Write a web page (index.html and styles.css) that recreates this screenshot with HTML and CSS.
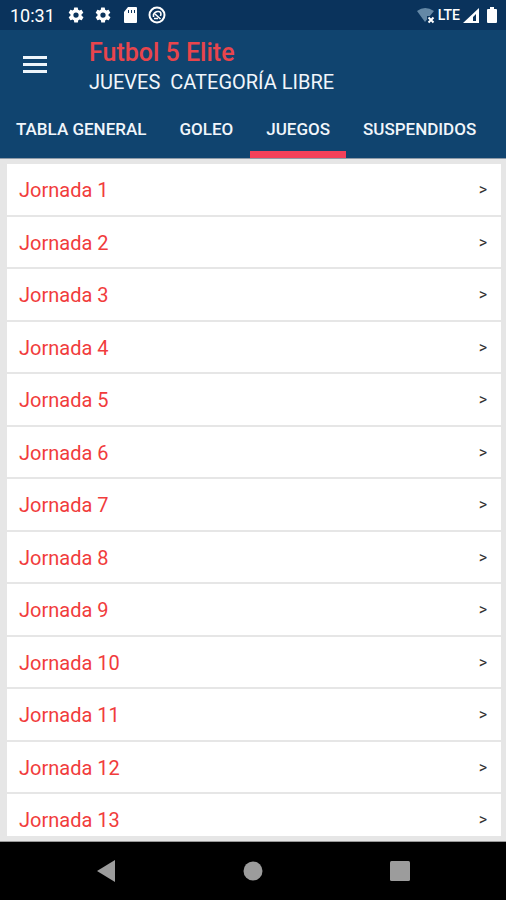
FILE: index.html
```html
<!DOCTYPE html>
<html lang="es">
<head>
<meta charset="utf-8">
<meta name="viewport" content="width=device-width, initial-scale=1">
<title>Futbol 5 Elite</title>
<link rel="stylesheet" href="styles.css">
</head>
<body>
<div class="status">
  <time class="clock">10:31</time>
  <div class="status-left">
    <svg width="18" height="18" viewBox="0 0 24 24"><path fill="#fff" fill-rule="evenodd" d="M19.4 13a7.800 7.800 0 0 0 0-2l2.100-1.600c.2-.2.3-.5.1-.7l-2-3.400c-.1-.3-.4-.3-.6-.3l-2.500 1a7.300 7.300 0 0 0-1.700-1l-.4-2.600a.5.5 0 0 0-.5-.4h-4a.5.5 0 0 0-.5.4L9.100 5a7.700 7.700 0 0 0-1.700 1L5 5c-.3-.1-.5 0-.6.2l-2 3.500c-.1.200-.1.500.1.600L4.600 11a8 8 0 0 0 0 2l-2.100 1.600c-.2.200-.3.500-.1.700l2 3.400c.1.300.4.300.6.300l2.500-1c.5.400 1.100.7 1.700 1l.4 2.600c0 .2.200.4.500.4h4c.2 0 .5-.2.500-.4L15 19a7 7 0 0 0 1.700-1l2.500 1c.2.100.5 0 .6-.2l2-3.400c.1-.3.1-.6-.1-.7zM12 8.500a3.500 3.500 0 1 1 0 7 3.500 3.500 0 0 1 0-7z"/></svg>
    <svg width="18" height="18" viewBox="0 0 24 24"><path fill="#fff" fill-rule="evenodd" d="M19.4 13a7.800 7.800 0 0 0 0-2l2.100-1.600c.2-.2.3-.5.1-.7l-2-3.400c-.1-.3-.4-.3-.6-.3l-2.500 1a7.300 7.300 0 0 0-1.700-1l-.4-2.600a.5.5 0 0 0-.5-.4h-4a.5.5 0 0 0-.5.4L9.100 5a7.700 7.700 0 0 0-1.700 1L5 5c-.3-.1-.5 0-.6.2l-2 3.500c-.1.200-.1.500.1.600L4.600 11a8 8 0 0 0 0 2l-2.100 1.600c-.2.200-.3.500-.1.700l2 3.400c.1.300.4.300.6.300l2.500-1c.5.400 1.100.7 1.700 1l.4 2.600c0 .2.200.4.500.4h4c.2 0 .5-.2.500-.4L15 19a7 7 0 0 0 1.700-1l2.500 1c.2.100.5 0 .6-.2l2-3.400c.1-.3.1-.6-.1-.7zM12 8.500a3.500 3.500 0 1 1 0 7 3.500 3.500 0 0 1 0-7z"/></svg>
    <svg width="18" height="18" viewBox="1 1 18 18"><path fill="#fff" fill-rule="evenodd" d="M8 2h8q1 0 1 1v14q0 1-1 1H5q-1 0-1-1V7zM8 5v3h1V5zm3 0v3h1V5zm3 0v3h1V5z"/></svg>
    <svg width="18" height="18" viewBox="1 1 18 18" fill="none" stroke="#fff"><circle cx="10" cy="10" r="7.500" stroke-width="2"/><path stroke-width="1.600" d="M6.500 12V9.500Q8 6 11.500 6.500T13.500 11M8 9l5.500 5M7 13.500h4"/></svg>
  </div>
  <div class="status-right">
    <svg width="20" height="20" viewBox="0 0 20 20"><path fill="#6488a6" d="M1 6q8-6 17 0l-5 6-4 5z"/><path fill="#0a335c" d="M11 11h8v8h-8z"/><path stroke="#fff" stroke-width="2" d="m12.500 12.500 5 5m0-5-5 5"/></svg>
    <span>LTE</span>
    <svg width="18" height="20" viewBox="0 0 18 20"><path fill="#fff" fill-rule="evenodd" d="M17 3v15H1zM14 9v7h-3v-4z"/></svg>
    <svg class="battery" width="12" height="20" viewBox="0 0 12 20"><path fill="#fff" d="M4 2h4v2h2q1 0 1 1v12q0 1-1 1H2q-1 0-1-1V5q0-1 1-1h2z"/></svg>
  </div>
</div>
<header class="header">
  <div class="bar">
    <button class="menu" type="button" aria-label="Menú">
      <svg width="24" height="20" viewBox="0 0 24 20"><path stroke="#eef5fb" stroke-width="3" d="M0 3.500h24M0 10.500h24M0 17.500h24"/></svg>
    </button>
    <div>
      <h1 class="title">Futbol 5 Elite</h1>
      <p class="subtitle">JUEVES&nbsp; CATEGORÍA LIBRE</p>
    </div>
  </div>
  <nav class="tabs">
    <a class="tab" href="#tabla">TABLA GENERAL</a>
    <a class="tab" href="#goleo">GOLEO</a>
    <a class="tab active" href="#juegos" aria-current="page">JUEGOS</a>
    <a class="tab" href="#suspendidos">SUSPENDIDOS</a>
  </nav>
</header>
<main class="content">
  <ul class="list">
    <li><a class="row" href="#j1">Jornada 1<span class="arrow">&gt;</span></a></li>
    <li><a class="row" href="#j2">Jornada 2<span class="arrow">&gt;</span></a></li>
    <li><a class="row" href="#j3">Jornada 3<span class="arrow">&gt;</span></a></li>
    <li><a class="row" href="#j4">Jornada 4<span class="arrow">&gt;</span></a></li>
    <li><a class="row" href="#j5">Jornada 5<span class="arrow">&gt;</span></a></li>
    <li><a class="row" href="#j6">Jornada 6<span class="arrow">&gt;</span></a></li>
    <li><a class="row" href="#j7">Jornada 7<span class="arrow">&gt;</span></a></li>
    <li><a class="row" href="#j8">Jornada 8<span class="arrow">&gt;</span></a></li>
    <li><a class="row" href="#j9">Jornada 9<span class="arrow">&gt;</span></a></li>
    <li><a class="row" href="#j10">Jornada 10<span class="arrow">&gt;</span></a></li>
    <li><a class="row" href="#j11">Jornada 11<span class="arrow">&gt;</span></a></li>
    <li><a class="row" href="#j12">Jornada 12<span class="arrow">&gt;</span></a></li>
    <li><a class="row" href="#j13">Jornada 13<span class="arrow">&gt;</span></a></li>
  </ul>
</main>
<div class="system-nav">
  <button type="button" aria-label="Atrás"><svg width="20" height="22" viewBox="0 0 20 22"><path fill="#9c9c9c" d="M19 0v22L1 11z"/></svg></button>
  <button type="button" aria-label="Inicio"><svg width="20" height="20" viewBox="0 0 20 20"><circle cx="10" cy="10" r="9.500" fill="#9c9c9c"/></svg></button>
  <button type="button" aria-label="Recientes"><svg width="20" height="20" viewBox="0 0 20 20"><rect width="20" height="20" rx="1.500" fill="#9c9c9c"/></svg></button>
</div>
</body>
</html>
```
FILE: styles.css
```css
* { box-sizing: border-box; }
body {
  margin: 0;
  height: 100vh;
  display: flex;
  flex-direction: column;
  font-family: Roboto, "Liberation Sans", sans-serif;
  background: #e6e6e6;
}
svg { display: block; }
a { text-decoration: none; }
button { padding: 0; border: 0; background: none; }
.status {
  height: 30px;
  padding: 0 8px 0 10px;
  display: flex;
  align-items: center;
  color: #fff;
  background: #0a335c;
}
.clock { font-size: 18px; }
.status-left { display: flex; gap: 9px; margin-left: 12px; }
.status-right { display: flex; align-items: center; gap: 2px; margin-left: auto; font-size: 14px; font-weight: 500; }
.battery { margin-left: 4px; }
.header { background: #10446f; border-bottom: 1px solid #8f9ba8; }
.bar { display: flex; align-items: flex-start; gap: 42px; padding: 8px 23px 0; }
.menu { margin-top: 16px; }
.title { margin: 0; font-size: 25px; line-height: 30px; font-weight: 500; color: #e8454c; }
.subtitle { margin: 0; font-size: 20px; line-height: 28px; color: #f1f6fb; }
.tabs { display: flex; gap: 1px; height: 62px; overflow: hidden; }
.tab {
  padding: 20px 16px 0;
  border-bottom: 7px solid transparent;
  font-size: 17px;
  line-height: 26px;
  font-weight: 500;
  color: #f1f6fb;
  white-space: nowrap;
}
.tab.active { border-color: #f2405a; }
.content {
  flex: 1;
  min-height: 0;
  display: flex;
  padding: 5px 5px 5px 7px;
  border-bottom: 1px solid #999;
}
.list {
  flex: 1;
  margin: 0;
  padding: 0;
  list-style: none;
  display: grid;
  grid-template-rows: repeat(12, minmax(0, 1fr)) 42px;
  gap: 2px;
  overflow: hidden;
}
.row {
  display: flex;
  justify-content: space-between;
  height: 100%;
  padding: 14px 14px 0 12px;
  font-size: 20px;
  line-height: 24px;
  color: #f13c3c;
  background: #fff;
}
.arrow { font-size: 16px; color: #333; }
.system-nav {
  height: 58px;
  padding: 0 96px;
  display: flex;
  align-items: center;
  justify-content: space-between;
  background: #000;
}
```
